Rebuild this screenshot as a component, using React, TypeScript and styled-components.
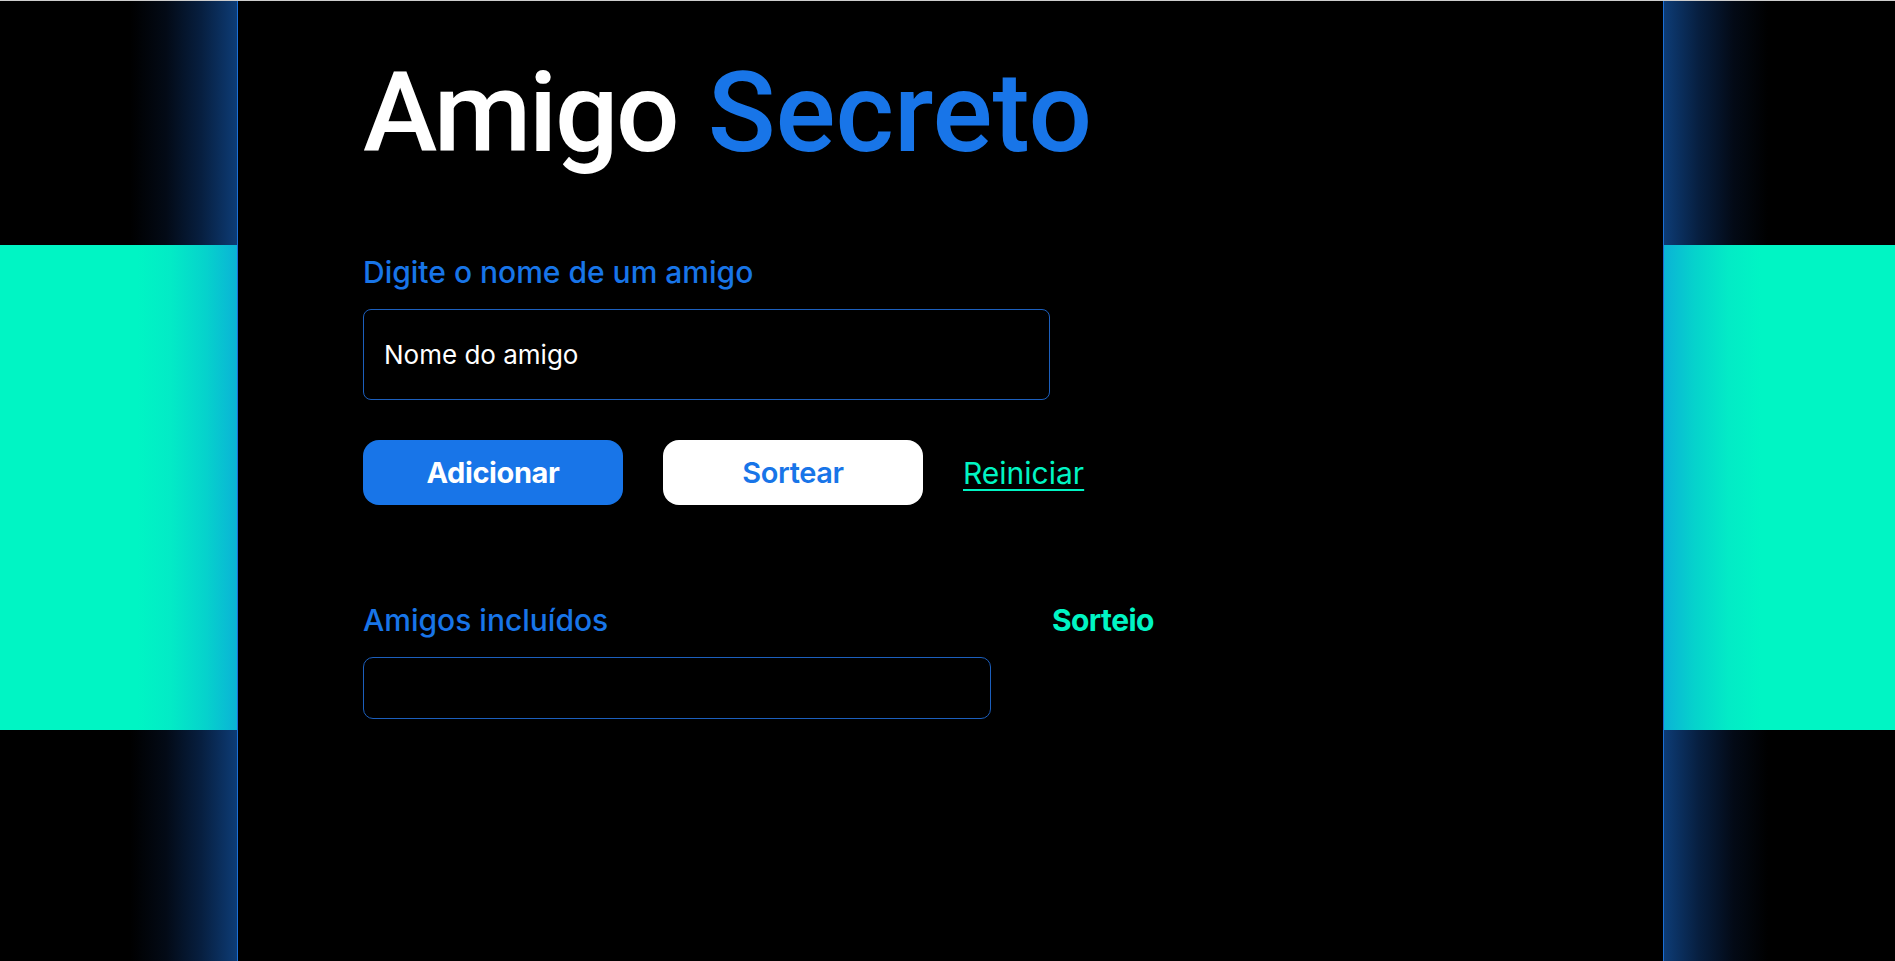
import React from "react";
import styled, { createGlobalStyle } from "styled-components";

const GlobalStyle = createGlobalStyle`
  html, body {
    margin: 0;
    padding: 0;
    background: #000;
  }
  body {
    font-family: Inter, "Noto Sans", "Liberation Sans", sans-serif;
    color: #fff;
  }
  * { box-sizing: border-box; }
`;

const BLUE = "#1875e8";
const CYAN = "#00f5c4";
const EDGE = "#1b6fd6";

const Page = styled.div`
  display: grid;
  grid-template-columns: 238px 1fr 232px;
  height: 961px;
  border-top: 1px solid #cdcdcd;
  background: #000;
  overflow: hidden;
`;

const Side = styled.aside<{ $side: "left" | "right" }>`
  display: flex;
  flex-direction: column;
  ${(p) => (p.$side === "left" ? `border-right: 1px solid ${EDGE};` : `border-left: 1px solid ${EDGE};`)}
`;

const DarkStripe = styled.div<{ $side: "left" | "right"; $h?: number }>`
  height: ${(p) => (p.$h ? `${p.$h}px` : "auto")};
  flex: ${(p) => (p.$h ? "none" : "1")};
  background: linear-gradient(
    ${(p) => (p.$side === "left" ? "to right" : "to left")},
    #000 0%,
    #000 55%,
    #030a16 70%,
    #071f40 85%,
    #0d3c76 100%
  );
`;

const Band = styled.div<{ $side: "left" | "right" }>`
  height: 485px;
  background: linear-gradient(
    ${(p) => (p.$side === "left" ? "to right" : "to left")},
    ${CYAN} 0%,
    ${CYAN} 58%,
    #03ebc6 72%,
    #06d2cc 87%,
    #0bb3d6 100%
  );
`;

const Main = styled.main`
  padding: 56px 0 0 125px;
  display: flex;
  flex-direction: column;
  align-items: flex-start;
`;

const Title = styled.h1`
  margin: 0;
  font-family: Roboto, "Liberation Sans", sans-serif;
  font-weight: 500;
  font-size: 112px;
  line-height: 112px;
  letter-spacing: -1px;
  word-spacing: 4px;
  color: #fff;
`;

const TitleWord = styled.span<{ $accent?: boolean }>`
  color: ${(p) => (p.$accent ? BLUE : "#fff")};
  letter-spacing: ${(p) => (p.$accent ? "0px" : "-2.5px")};
`;

const FieldLabel = styled.label<{ $color?: string; $bold?: boolean }>`
  display: block;
  font-family: Inter, "Liberation Sans", sans-serif;
  font-size: 30px;
  line-height: 35px;
  font-weight: ${(p) => (p.$bold ? 700 : 500)};
  letter-spacing: ${(p) => (p.$bold ? "-0.6px" : "0px")};
  color: ${(p) => p.$color || BLUE};
`;

const FormBlock = styled.section`
  margin-top: 86px;
  display: flex;
  flex-direction: column;
`;

const NameInput = styled.input`
  margin-top: 19px;
  width: 687px;
  height: 91px;
  padding: 0 20px;
  background: #000;
  border: 1px solid #1c5fbd;
  border-radius: 8px;
  color: #fff;
  font-family: Inter, "Liberation Sans", sans-serif;
  font-size: 26px;
  outline: none;
  &::placeholder {
    color: #fff;
    opacity: 1;
  }
`;

const Actions = styled.div`
  margin-top: 40px;
  display: flex;
  align-items: center;
  gap: 40px;
`;

const Button = styled.button<{ $variant: "primary" | "light" }>`
  width: 260px;
  height: 65px;
  border: none;
  border-radius: 16px;
  font-family: Inter, "Liberation Sans", sans-serif;
  font-size: 29px;
  letter-spacing: -0.4px;
  cursor: pointer;
  background: ${(p) => (p.$variant === "primary" ? BLUE : "#fff")};
  color: ${(p) => (p.$variant === "primary" ? "#fff" : BLUE)};
  font-weight: ${(p) => (p.$variant === "primary" ? 700 : 600)};
`;

const ResetLink = styled.a`
  font-family: Inter, "Liberation Sans", sans-serif;
  font-size: 30px;
  color: ${CYAN};
  text-decoration: underline;
  text-underline-offset: 5px;
  text-decoration-thickness: 2px;
  cursor: pointer;
`;

const Results = styled.section`
  margin-top: 98px;
  display: flex;
  gap: 61px;
  align-items: flex-start;
`;

const ListColumn = styled.div`
  display: flex;
  flex-direction: column;
  gap: 19px;
`;

const FriendList = styled.ul`
  margin: 0;
  padding: 0;
  list-style: none;
  width: 628px;
  height: 62px;
  border: 1px solid #1c5fbd;
  border-radius: 10px;
`;

const DrawColumn = styled.div`
  display: flex;
  flex-direction: column;
`;

export default function App() {
  return (
    <>
      <GlobalStyle />
      <Page>
        <Side $side="left">
          <DarkStripe $side="left" $h={244} />
          <Band $side="left" />
          <DarkStripe $side="left" />
        </Side>
        <Main>
          <Title>
            <TitleWord>Amigo</TitleWord> <TitleWord $accent>Secreto</TitleWord>
          </Title>
          <FormBlock>
            <FieldLabel htmlFor="amigo">Digite o nome de um amigo</FieldLabel>
            <NameInput id="amigo" placeholder="Nome do amigo" />
          </FormBlock>
          <Actions>
            <Button $variant="primary">Adicionar</Button>
            <Button $variant="light">Sortear</Button>
            <ResetLink>Reiniciar</ResetLink>
          </Actions>
          <Results>
            <ListColumn>
              <FieldLabel>Amigos incluídos</FieldLabel>
              <FriendList />
            </ListColumn>
            <DrawColumn>
              <FieldLabel $color={CYAN} $bold>
                Sorteio
              </FieldLabel>
            </DrawColumn>
          </Results>
        </Main>
        <Side $side="right">
          <DarkStripe $side="right" $h={244} />
          <Band $side="right" />
          <DarkStripe $side="right" />
        </Side>
      </Page>
    </>
  );
}
